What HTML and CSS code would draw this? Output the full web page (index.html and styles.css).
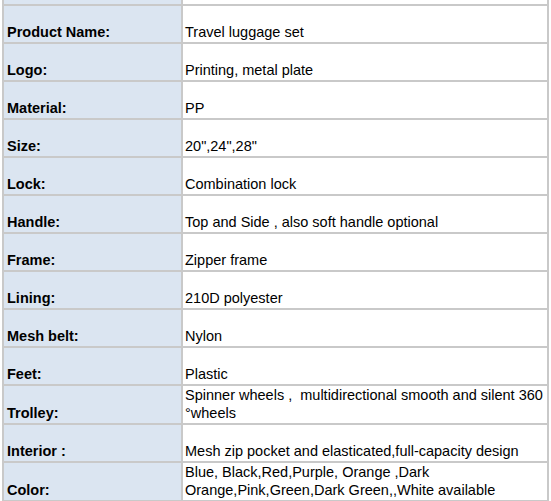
FILE: index.html
```html
<!DOCTYPE html>
<html>
<head>
<meta charset="utf-8">
<link rel="stylesheet" href="styles.css">
</head>
<body>
<table class="spec">
  <tr class="ghost"><td class="label"></td><td class="value"></td></tr>
  <tr><td class="label">Product Name:</td><td class="value">Travel luggage set</td></tr>
  <tr><td class="label">Logo:</td><td class="value">Printing, metal plate</td></tr>
  <tr><td class="label">Material:</td><td class="value">PP</td></tr>
  <tr><td class="label">Size:</td><td class="value">20",24",28"</td></tr>
  <tr><td class="label">Lock:</td><td class="value">Combination lock</td></tr>
  <tr><td class="label">Handle:</td><td class="value">Top and Side , also soft handle optional</td></tr>
  <tr><td class="label">Frame:</td><td class="value">Zipper frame</td></tr>
  <tr><td class="label">Lining:</td><td class="value">210D polyester</td></tr>
  <tr><td class="label">Mesh belt:</td><td class="value">Nylon</td></tr>
  <tr><td class="label">Feet:</td><td class="value">Plastic</td></tr>
  <tr><td class="label">Trolley:</td><td class="value">Spinner wheels ,&nbsp; multidirectional smooth and silent 360<br>°wheels</td></tr>
  <tr><td class="label">Interior :</td><td class="value">Mesh zip pocket and elasticated,full-capacity design</td></tr>
  <tr><td class="label">Color:</td><td class="value">Blue, Black,Red,Purple, Orange ,Dark<br>Orange,Pink,Green,Dark Green,,White available</td></tr>
</table>
</body>
</html>
```
FILE: styles.css
```css
html, body {
  margin: 0;
  padding: 0;
  background: #ffffff;
  overflow: hidden;
}
.spec {
  border-collapse: collapse;
  margin-top: -34px;
  margin-left: 2px;
  font-family: "Liberation Sans", Arial, sans-serif;
  font-size: 14.5px;
  line-height: 18px;
  color: #000;
}
.spec td {
  border: 2px solid #c9c9c9;
  height: 36px;
  padding: 0 1px 1px 2px;
  vertical-align: bottom;
  box-sizing: border-box;
  white-space: nowrap;
}
.spec tr {
  height: 38px;
}
.spec .label {
  width: 179px;
  background: #dbe5f1;
  font-weight: bold;
  padding-left: 3px;
}
.spec .value {
  width: 366px;
  background: #ffffff;
}
```
